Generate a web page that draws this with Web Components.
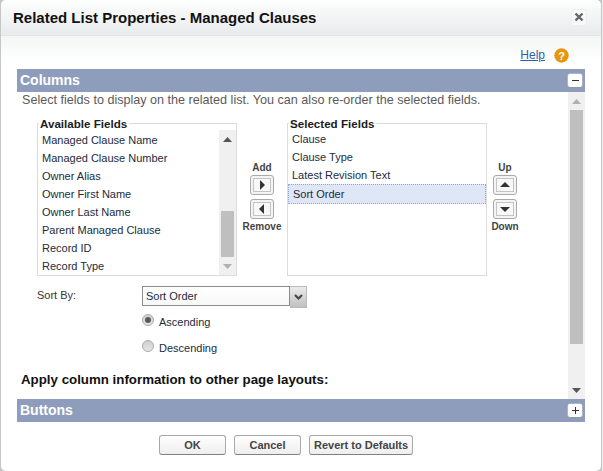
<!DOCTYPE html>
<html>
<head>
<meta charset="utf-8">
<title>Related List Properties</title>
<style>
    html, body { margin: 0; height: 100%; overflow: hidden; }
    body { background: linear-gradient(90deg, #c6c6c6 602px, #eee 602px); font-family: "Liberation Sans", Arial, sans-serif; font-size: 11px; color: #222; }
</style>
</head>
<body>
<template id="dialog-tpl">
    <style>
        :host { display: flex; flex-direction: column; width: 600px; height: 471px; margin-left: 1px; box-sizing: border-box; border-radius: 5px; background: #fff; overflow: hidden; }
        header { height: 36px; flex: none; box-sizing: border-box; padding: 0 14px 1px 12px; display: flex; align-items: center; justify-content: space-between;
            background: linear-gradient(#fdfefe, #e8ebec); border-bottom: 1px solid #e4e6e6; }
        h1 { margin: 0; font-size: 15px; font-weight: bold; color: #111; }
        .close { width: 16px; height: 17px; box-sizing: border-box; border: 1px solid #eeeeee; border-radius: 2px; background: #f7f8f8; display: flex; align-items: center; justify-content: center; }
        .help { height: 33px; flex: none; box-sizing: border-box; padding: 12px 32px 0 0; display: flex; justify-content: flex-end; gap: 9px;
            background: linear-gradient(#f3f4f4, #fff 70%); }
        .help a { font-size: 12px; color: #2a5fae; text-decoration: underline; line-height: 14px; }
        .help svg { display: block; }
        .body { flex: 1; padding: 0 16px; display: flex; flex-direction: column; min-height: 0; }
        footer { flex: none; height: 49px; display: flex; gap: 8px; padding: 13px 0 0 158px; box-sizing: border-box; }
    </style>
    <header><h1><slot name="title"></slot></h1>
        <div class="close"><svg width="10" height="10" viewBox="0 0 10 10"><path d="M1.5 1.5l7 7M8.5 1.5l-7 7" stroke="#666" stroke-width="2.4"/></svg></div>
    </header>
    <div class="help"><a>Help</a>
        <svg width="15" height="15" viewBox="0 0 15 15"><circle cx="7.5" cy="7.5" r="7.2" fill="#e8960f"/><text x="7.5" y="11.5" text-anchor="middle" font-family="Liberation Sans" font-weight="bold" font-size="11" fill="#fff">?</text></svg>
    </div>
    <div class="body"><slot></slot></div>
    <footer><slot name="footer"></slot></footer>
</template>

<template id="section-tpl">
    <style>
        :host { display: flex; flex-direction: column; flex: none; }
        .bar { height: 23px; flex: none; background: #8f9dbd; display: flex; align-items: center; justify-content: space-between; padding: 0 3px 0 3px; }
        .bar span { color: #fff; font-size: 14px; font-weight: bold; margin-top: -1px; }
        .tog { width: 14px; height: 13px; background: #fff; border-radius: 2px; box-shadow: 0 1px 0 #999, 0 0 0 .5px #ccc; display: flex; align-items: center; justify-content: center; }
        .content { flex: 1; min-height: 0; display: flex; }
    </style>
    <div class="bar"><span id="t"></span><div class="tog"><svg width="9" height="9" viewBox="0 0 9 9"><path id="p" stroke="#333" stroke-width="1" fill="none"/></svg></div></div>
    <div class="content"><slot></slot></div>
</template>

<template id="scroll-tpl">
    <style>
        :host { display: flex; flex-direction: column; flex: none; width: 17px; background: #f0f0f0; align-items: center; height: 100%; box-sizing: border-box; }
        .arrow { flex: none; height: 18px; display: flex; align-items: center; justify-content: center; }
        .track { flex: 1; width: 100%; display: flex; flex-direction: column; min-height: 0; }
        .before { flex: none; }
        .thumb { flex: none; background: #bfbfbf; margin: 0 2px; }
    </style>
    <div class="arrow"><svg width="9" height="5" viewBox="0 0 9 5"><path id="u" d="M4.5 0L9 5H0z" fill="#555"/></svg></div>
    <div class="track"><div class="before" id="b"></div><div class="thumb" id="th"></div></div>
    <div class="arrow"><svg width="9" height="5" viewBox="0 0 9 5"><path id="d" d="M0 0H9L4.5 5z" fill="#555"/></svg></div>
</template>

<template id="listbox-tpl">
    <style>
        :host { display: block; position: relative; width: 200px; height: 153px; box-sizing: border-box; border: 1px solid #dcdcdc; }
        .legend { position: absolute; left: 1px; top: -7px; background: #fff; padding: 0 2px 0 1px; font-size: 11.6px; font-weight: bold; color: #1c1c1c; line-height: 14px; }
        .wrap { display: flex; height: 100%; padding-top: 6px; box-sizing: border-box; }
        .items { flex: 1; min-width: 0; }
        :host([scrolls]) .items { padding-top: 1px; }
    </style>
    <div class="legend" id="lg"></div>
    <div class="wrap"><div class="items"><slot></slot></div><slot name="bar"></slot></div>
</template>

<template id="option-tpl">
    <style>
        :host { display: block; height: 18px; line-height: 18px; padding-left: 4px; font-size: 11px; color: #222b3c; white-space: nowrap; box-sizing: border-box; }
        :host([selected]) { height: 20px; background: #dfe6f5; border: 1px dotted #8ea8d8; padding-left: 4px; }
    </style>
    <slot></slot>
</template>

<template id="mover-tpl">
    <style>
        :host { display: flex; flex-direction: column; align-items: center; font-size: 10px; font-weight: bold; color: #444; }
        .lbl { line-height: 12px; }
        .btn { width: 24px; height: 20px; box-sizing: border-box; border: 1px solid #aaa; border-radius: 3px; background: #f4f4f4; padding: 2px; margin-top: 1px; }
        .btn + .btn { margin-top: 4px; margin-bottom: 2px; }
        .in { height: 100%; border: 1px solid #c4c4c4; background: #f8f8f8; display: flex; align-items: center; justify-content: center; box-sizing: border-box; }
    </style>
    <div class="lbl" id="a"></div>
    <div class="btn"><div class="in"><svg width="10" height="10" viewBox="0 0 10 10"><path id="p1" fill="#333"/></svg></div></div>
    <div class="btn"><div class="in"><svg width="10" height="10" viewBox="0 0 10 10"><path id="p2" fill="#333"/></svg></div></div>
    <div class="lbl" id="b"></div>
</template>

<template id="button-tpl">
    <style>
        :host { display: block; height: 20px; box-sizing: border-box; border: 1px solid #a8a8a8; border-bottom-color: #808080; border-radius: 3px; background: linear-gradient(#fff, #eee); font-size: 11px; font-weight: bold; color: #444; line-height: 18px; text-align: center; padding: 0 4px; }
    </style>
    <slot></slot>
</template>

<template id="radio-tpl">
    <style>
        :host { display: flex; gap: 5px; height: 14px; font-size: 11px; line-height: 16px; color: #222b3c; }
        .dot { width: 12px; height: 12px; box-sizing: border-box; border: 1px solid #aaa; border-radius: 50%; background: linear-gradient(#cfcfcf, #e6e6e6); display: flex; align-items: center; justify-content: center; }
        .dot i { width: 6px; height: 6px; border-radius: 50%; background: #5a5a5a; }
    </style>
    <div class="dot" id="d"></div><slot></slot>
</template>

<template id="select-tpl">
    <style>
        :host { display: flex; width: 165px; height: 20px; }
        .v { width: 148px; box-sizing: border-box; border: 1px solid #8c8c8c; background: linear-gradient(#fff, #f6f8f6); font-size: 11px; color: #222b3c; line-height: 18px; padding-left: 3px; }
        .b { width: 17px; height: 22px; box-sizing: border-box; border: 1px solid #bbb; border-left: 0; background: linear-gradient(#ececec, #c0c0c0); display: flex; align-items: center; justify-content: center; }
    </style>
    <div class="v"><slot></slot></div>
    <div class="b"><svg width="9" height="7" viewBox="0 0 9 7"><path d="M1 1l3.5 3.5L8 1" stroke="#444" stroke-width="2" fill="none"/></svg></div>
</template>

<rel-dialog>
    <span slot="title">Related List Properties - Managed Clauses</span>
    <rel-section label="Columns" open>
        <columns-panel>
            <rel-listbox slot="available" legend="Available Fields" scrolls>
                <rel-option>Managed Clause Name</rel-option>
                <rel-option>Managed Clause Number</rel-option>
                <rel-option>Owner Alias</rel-option>
                <rel-option>Owner First Name</rel-option>
                <rel-option>Owner Last Name</rel-option>
                <rel-option>Parent Managed Clause</rel-option>
                <rel-option>Record ID</rel-option>
                <rel-option>Record Type</rel-option>
                <rel-scroll slot="bar" top="63" size="46" dim="bottom"></rel-scroll>
            </rel-listbox>
            <rel-mover slot="add" first="Add" second="Remove"></rel-mover>
            <rel-listbox slot="selected" legend="Selected Fields">
                <rel-option>Clause</rel-option>
                <rel-option>Clause Type</rel-option>
                <rel-option>Latest Revision Text</rel-option>
                <rel-option selected>Sort Order</rel-option>
            </rel-listbox>
            <rel-mover slot="order" vertical first="Up" second="Down"></rel-mover>
            <rel-select slot="select">Sort Order</rel-select>
            <rel-radio slot="radios" checked>Ascending</rel-radio>
            <rel-radio slot="radios">Descending</rel-radio>
            <rel-scroll slot="bar" top="0" size="234" dim="top"></rel-scroll>
        </columns-panel>
    </rel-section>
    <rel-section label="Buttons"></rel-section>
    <rel-button slot="footer" style="width:67px">OK</rel-button>
    <rel-button slot="footer" style="width:67px">Cancel</rel-button>
    <rel-button slot="footer">Revert to Defaults</rel-button>
</rel-dialog>

<script>
    // tiny helper, every element just clones its template
    function attach(el, id) {
        const root = el.attachShadow({mode: 'open'});
        root.appendChild(document.getElementById(id).content.cloneNode(true));
        return root;
    }

    class RelDialog extends HTMLElement {
        constructor() { super(); attach(this, 'dialog-tpl'); }
    }

    class RelSection extends HTMLElement {
        constructor() {
            super();
            const root = attach(this, 'section-tpl');
            root.getElementById('t').textContent = this.getAttribute('label');
            const open = this.hasAttribute('open');
            root.getElementById('p').setAttribute('d', open ? 'M1 4.5H8' : 'M1 4.5H8M4.5 1V8');
        }
    }

    class RelScroll extends HTMLElement {
        constructor() {
            super();
            const root = attach(this, 'scroll-tpl');
            root.getElementById('b').style.height = (this.getAttribute('top') || 0) + 'px';
            root.getElementById('th').style.height = (this.getAttribute('size') || 0) + 'px';
            const dim = this.getAttribute('dim');
            root.getElementById(dim === 'top' ? 'u' : 'd').setAttribute('fill', '#b0b0b0');
        }
    }

    class RelListbox extends HTMLElement {
        constructor() {
            super();
            const root = attach(this, 'listbox-tpl');
            root.getElementById('lg').textContent = this.getAttribute('legend');
        }
    }

    class RelOption extends HTMLElement {
        constructor() { super(); attach(this, 'option-tpl'); }
    }

    class RelMover extends HTMLElement {
        constructor() {
            super();
            const root = attach(this, 'mover-tpl');
            const vertical = this.hasAttribute('vertical');
            root.getElementById('a').textContent = this.getAttribute('first');
            root.getElementById('b').textContent = this.getAttribute('second');
            root.getElementById('p1').setAttribute('d', vertical ? 'M0 7L5 2L10 7z' : 'M3 0L8 5L3 10z');
            root.getElementById('p2').setAttribute('d', vertical ? 'M0 3H10L5 8z' : 'M7 0V10L2 5z');
        }
    }

    class RelButton extends HTMLElement {
        constructor() { super(); attach(this, 'button-tpl'); }
    }

    class RelRadio extends HTMLElement {
        constructor() {
            super();
            const root = attach(this, 'radio-tpl');
            if (this.hasAttribute('checked')) root.getElementById('d').innerHTML = '<i></i>';
        }
    }

    class RelSelect extends HTMLElement {
        constructor() { super(); attach(this, 'select-tpl'); }
    }

    class ColumnsPanel extends HTMLElement {
        constructor() {
            super();
            const root = this.attachShadow({mode: 'open'});
            root.innerHTML = `
            <style>
                :host { display: flex; flex: 1; min-width: 0; height: 307px; }
                .main { flex: 1; min-width: 0; display: flex; flex-direction: column; }
                .intro { margin: 1px 0 0 5px; font-size: 12.6px; line-height: 14px; color: #5a5a5a; white-space: nowrap; }
                .pick { display: flex; margin: 16px 0 0 20px; }
                .mid { width: 50px; padding-top: 39px; box-sizing: border-box; display: flex; justify-content: center; }
                .end { width: 36px; padding-top: 39px; box-sizing: border-box; display: flex; justify-content: center; }
                .sort { display: flex; margin: 10px 0 0 20px; }
                .sort label { width: 105px; font-size: 11px; color: #333; line-height: 19px; }
                .radios { margin: 8px 0 0 125px; display: flex; flex-direction: column; gap: 12px; }
                h3 { margin: 18px 0 0 4px; font-size: 13.3px; line-height: 15px; font-weight: bold; color: #111; }
            </style>
            <div class="main">
                <div class="intro">Select fields to display on the related list. You can also re-order the selected fields.</div>
                <div class="pick">
                    <slot name="available"></slot>
                    <div class="mid"><slot name="add"></slot></div>
                    <slot name="selected"></slot>
                    <div class="end"><slot name="order"></slot></div>
                </div>
                <div class="sort"><label>Sort By:</label><slot name="select"></slot></div>
                <div class="radios"><slot name="radios"></slot></div>
                <h3>Apply column information to other page layouts:</h3>
            </div>
            <slot name="bar"></slot>`;
        }
    }

    customElements.define('rel-dialog', RelDialog);
    customElements.define('rel-section', RelSection);
    customElements.define('rel-scroll', RelScroll);
    customElements.define('rel-listbox', RelListbox);
    customElements.define('rel-option', RelOption);
    customElements.define('rel-mover', RelMover);
    customElements.define('rel-button', RelButton);
    customElements.define('rel-radio', RelRadio);
    customElements.define('rel-select', RelSelect);
    customElements.define('columns-panel', ColumnsPanel);
</script>
</body>
</html>
